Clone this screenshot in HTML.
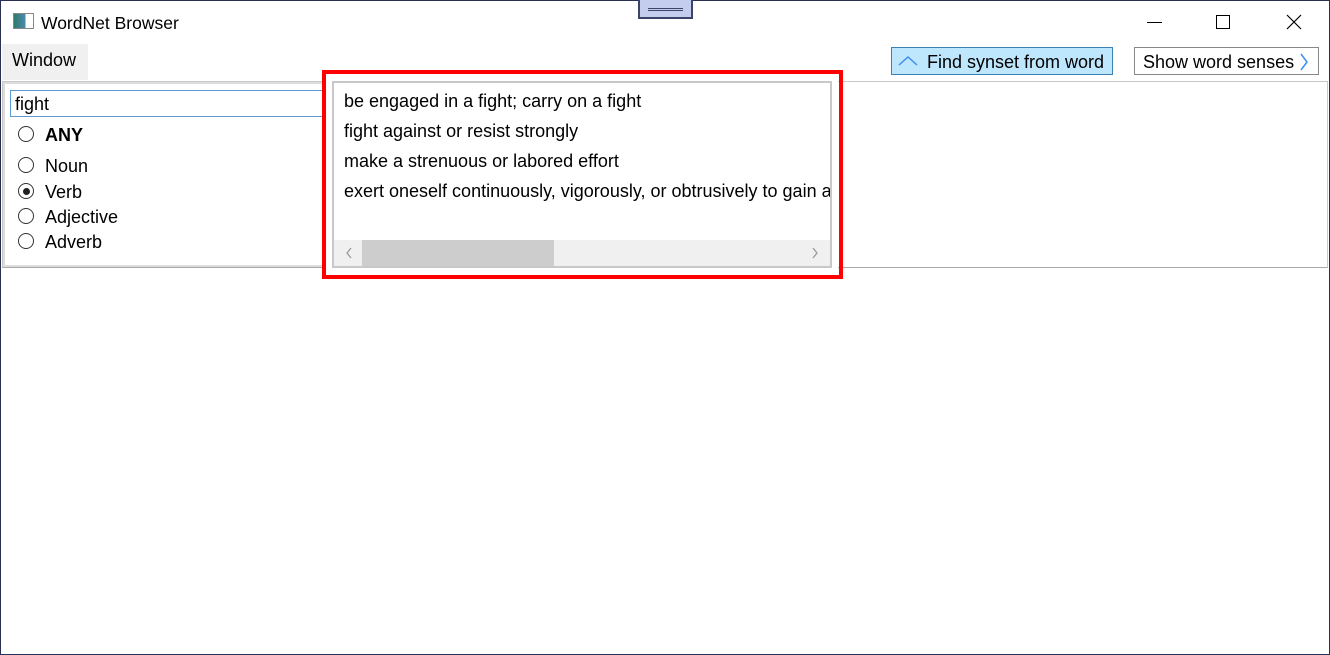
<!DOCTYPE html>
<html><head><meta charset="utf-8"><style>
*{margin:0;padding:0;box-sizing:border-box}
body{width:1330px;height:655px;position:relative;background:#fff;font-family:"Segoe UI","Liberation Sans",sans-serif;color:#000;overflow:hidden}
.a{position:absolute}
.t{font-size:18px;white-space:nowrap;line-height:22px}
.rad{position:absolute;width:16px;height:16px;border:1px solid #333;border-radius:50%;background:#fff}
</style></head><body>
<div class="a" style="left:0;top:0;width:1330px;height:655px;border:1px solid #2b3050"></div>
<div class="a" style="left:13px;top:13px;width:21px;height:16px;border:1px solid #888;background:linear-gradient(90deg,#2e7a6a 0,#4d8ab0 60%,#fff 60%)"></div>
<div class="a t" style="left:41px;top:12px;font-size:17.5px">WordNet Browser</div>
<div class="a" style="left:638px;top:0;width:55px;height:19px;background:#c5cdef;border:2px solid #3a4468;border-top:none"></div>
<div class="a" style="left:648px;top:8px;width:35px;height:3px;border-top:1px solid #3a4468;border-bottom:1px solid #3a4468"></div>
<div class="a" style="left:1147px;top:22px;width:15px;height:1px;background:#000"></div>
<div class="a" style="left:1216px;top:15px;width:14px;height:14px;border:1px solid #000"></div>
<svg class="a" style="left:1286px;top:14px" width="16" height="16"><path d="M1 1L15 15M15 1L1 15" stroke="#000" stroke-width="1.2"/></svg>
<div class="a" style="left:2px;top:44px;width:86px;height:36px;background:#f0f0f0"></div>
<div class="a t" style="left:12px;top:49px">Window</div>
<div class="a" style="left:891px;top:47px;width:222px;height:28px;background:#bee6fd;border:1px solid #3c7fb1"></div>
<svg class="a" style="left:897px;top:55px" width="22" height="12"><path d="M2 10L11 2L20 10" stroke="#3c8ef0" stroke-width="1.5" fill="none"/></svg>
<div class="a t" style="left:927px;top:51px">Find synset from word</div>
<div class="a" style="left:1134px;top:47px;width:185px;height:28px;background:#fff;border:1px solid #888"></div>
<div class="a t" style="left:1143px;top:51px">Show word senses</div>
<svg class="a" style="left:1299px;top:52px" width="10" height="20"><path d="M2 2L8 10L2 18" stroke="#3c8ef0" stroke-width="1.5" fill="none"/></svg>
<div class="a" style="left:2px;top:81px;width:1326px;height:187px;border:1px solid #c8c8c8;border-bottom-color:#aaa"></div>
<div class="a" style="left:3px;top:82px;width:322px;height:185px;border:2px solid #ddd;border-right:none"></div>
<div class="a" style="left:10px;top:90px;width:315px;height:27px;border:1px solid #5b9bd5"></div>
<div class="a t" style="left:15px;top:93px">fight</div>
<div class="rad" style="left:18px;top:126px"></div><div class="a t" style="left:45px;top:124px;font-weight:bold">ANY</div>
<div class="rad" style="left:18px;top:157px"></div><div class="a t" style="left:45px;top:155px">Noun</div>
<div class="rad" style="left:18px;top:183px"></div><div class="a" style="left:23px;top:188px;width:7px;height:7px;border-radius:50%;background:#222"></div><div class="a t" style="left:45px;top:181px">Verb</div>
<div class="rad" style="left:18px;top:208px"></div><div class="a t" style="left:45px;top:206px">Adjective</div>
<div class="rad" style="left:18px;top:233px"></div><div class="a t" style="left:45px;top:231px">Adverb</div>
<div class="a" style="left:326px;top:74px;width:512px;height:200px;background:#fff"></div>
<div class="a" style="left:332px;top:81px;width:500px;height:187px;border:2px solid #c8c8c8;overflow:hidden">
<div class="a t" style="left:10px;top:7px">be engaged in a fight; carry on a fight</div>
<div class="a t" style="left:10px;top:37px">fight against or resist strongly</div>
<div class="a t" style="left:10px;top:67px">make a strenuous or labored effort</div>
<div class="a t" style="left:10px;top:97px">exert oneself continuously, vigorously, or obtrusively to gain an advantage</div>
<div class="a" style="left:0;top:157px;width:496px;height:26px;background:#f0f0f0"></div>
<div class="a" style="left:28px;top:157px;width:192px;height:26px;background:#cdcdcd"></div>
<svg class="a" style="left:10px;top:163px" width="10" height="14"><path d="M7 2L3 7L7 12" stroke="#999" stroke-width="1.3" fill="none"/></svg>
<svg class="a" style="left:476px;top:163px" width="10" height="14"><path d="M3 2L7 7L3 12" stroke="#999" stroke-width="1.3" fill="none"/></svg>
</div>
<div class="a" style="left:322px;top:70px;width:521px;height:209px;border:4px solid #f00"></div>
</body></html>
